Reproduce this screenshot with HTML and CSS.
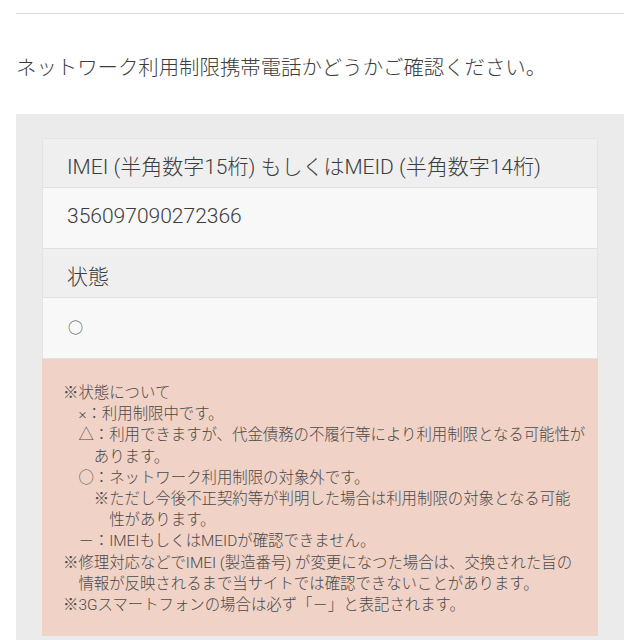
FILE: index.html
```html
<!DOCTYPE html>
<html lang="ja">
<head>
    <meta charset="UTF-8">
    <meta name="viewport" content="width=device-width, initial-scale=1.0">
    <title>ネットワーク利用制限確認</title>
    <link rel="stylesheet" href="styles.css">
</head>
<body>
    <div class="page">
        <hr class="top-rule">

        <p class="lead">ネットワーク利用制限携帯電話かどうかご確認ください。</p>

        <div class="result-panel">
            <div class="result-table">
                <div class="row-head">IMEI (半角数字15桁) もしくはMEID (半角数字14桁)</div>
                <div class="row-value">356097090272366</div>
                <div class="row-head">状態</div>
                <div class="row-value"><span class="mark">○</span></div>
            </div>

            <div class="notes">
                <p>※状態について</p>
                <p class="lv1">×：利用制限中です。</p>
                <p class="lv1">△：利用できますが、代金債務の不履行等により利用制限となる可能性が<br>あります。</p>
                <p class="lv1">○：ネットワーク利用制限の対象外です。</p>
                <p class="lv2">※ただし今後不正契約等が判明した場合は利用制限の対象となる可能<br>性があります。</p>
                <p class="lv1">－：IMEIもしくはMEIDが確認できません。</p>
                <p class="lv0">※修理対応などでIMEI (製造番号) が変更になつた場合は、交換された旨の<br>情報が反映されるまで当サイトでは確認できないことがあります。</p>
                <p class="lv0">※3Gスマートフォンの場合は必ず「－」と表記されます。</p>
            </div>
        </div>
    </div>
</body>
</html>
```

FILE: styles.css
```css
body {
    margin: 0;
    background: #ffffff;
    font-family: Roboto, "Noto Sans CJK JP", sans-serif;
    font-weight: 300;
    color: #444;
}

.page {
    padding: 13px 16px 0;
}

.top-rule {
    margin: 0;
    border: none;
    border-top: 1px solid #d9d9d9;
}

.lead {
    margin: 0;
    padding: 40px 0 31px;
    font-size: 20.4px;
    line-height: 29px;
    color: #3c3c3c;
    white-space: nowrap;
}

.result-panel {
    background: #ebebeb;
    padding: 24px 26px 24px;
}

.result-table {
    border: 1px solid #e4e4e4;
    border-bottom: none;
}

.row-head,
.row-value {
    padding: 0 24px;
    font-size: 21px;
    color: #3c3c3c;
    border-bottom: 1px solid #e1e1e1;
}

.row-head {
    background: #efefef;
    height: 48px;
    line-height: 56px;
}

.row-value {
    background: #f8f8f8;
    height: 60px;
    line-height: 56px;
}

.mark {
    font-size: 15px;
    margin-left: 1px;
}

.notes {
    background: #f0d2c6;
    padding: 24px 8px 20px 21px;
    font-size: 15.4px;
    line-height: 21.2px;
    color: #4a4a4a;
    white-space: nowrap;
}

.notes p {
    margin: 0;
}

.notes .lv1 {
    padding-left: 2em;
    text-indent: -1em;
}

.notes .lv2 {
    padding-left: 3em;
    text-indent: -1em;
}

.notes .lv0 {
    padding-left: 1em;
    text-indent: -1em;
}
```
